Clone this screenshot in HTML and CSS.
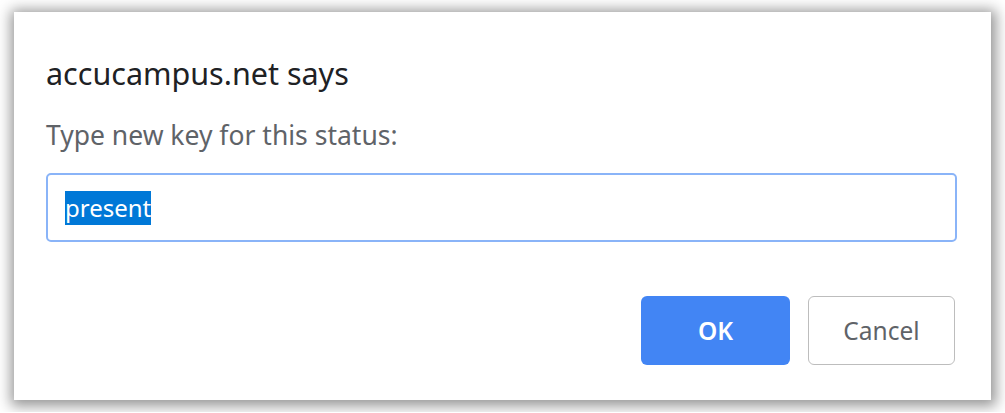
FILE: index.html
```html
<!DOCTYPE html>
<html lang="en">
<head>
<meta charset="utf-8">
<title>accucampus.net says</title>
<link rel="stylesheet" href="styles.css">
</head>
<body>
<div class="dialog">
  <div class="title">accucampus.net says</div>
  <div class="label">Type new key for this status:</div>
  <div class="field" role="textbox"><span class="sel">present</span></div>
  <div class="actions">
    <button class="btn ok">OK</button>
    <button class="btn cancel">Cancel</button>
  </div>
</div>
</body>
</html>
```
FILE: styles.css
```css
html, body {
  margin: 0;
  padding: 0;
  background: #ffffff;
}
body {
  padding: 12px 14px;
  font-family: "Noto Sans", "Open Sans", sans-serif;
}
.dialog {
  box-sizing: border-box;
  width: 977px;
  height: 388px;
  background: #ffffff;
  box-shadow: 1px 2px 13px 4px rgba(0, 0, 0, 0.42);
  padding: 43px 34px 35px 32px;
  display: flex;
  flex-direction: column;
}
.title {
  font-size: 30.5px;
  line-height: 36px;
  color: #202124;
}
.label {
  margin-top: 28px;
  font-size: 26.5px;
  line-height: 32px;
  color: #5f6368;
}
.field {
  box-sizing: border-box;
  margin-top: 22px;
  height: 69px;
  border: 2px solid #8ab4f8;
  border-radius: 5px;
  padding: 0 17px;
  display: flex;
  align-items: center;
  font-size: 24px;
}
.sel {
  background: #0078d7;
  color: #ffffff;
  line-height: 34px;
}
.actions {
  margin-top: 54px;
  display: flex;
  justify-content: flex-end;
  gap: 18px;
  padding-right: 2px;
}
.btn {
  box-sizing: border-box;
  height: 69px;
  border-radius: 6px;
  font-family: "Noto Sans", "Open Sans", sans-serif;
  font-size: 24.5px;
  cursor: pointer;
}
.ok {
  width: 149px;
  background: #4285f4;
  border: none;
  color: #ffffff;
  font-weight: 600;
}
.cancel {
  width: 147px;
  background: #ffffff;
  border: 1.5px solid #bdbdbd;
  color: #5f6368;
}
```
